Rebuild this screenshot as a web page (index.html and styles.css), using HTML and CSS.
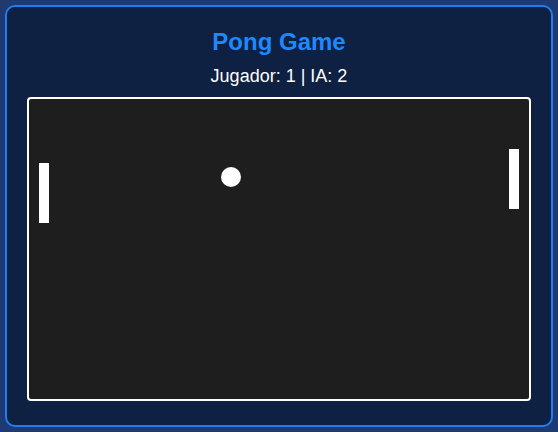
FILE: index.html
```html
<!DOCTYPE html>
<html lang="es">
<head>
<meta charset="utf-8">
<title>Pong Game</title>
<link rel="stylesheet" href="styles.css">
</head>
<body>
<div class="game-container">
  <h1 class="title">Pong Game</h1>
  <p class="score">Jugador: 1 | IA: 2</p>
  <svg class="board" width="500" height="300" viewBox="0 0 500 300">
    <rect x="10" y="64" width="10" height="60" fill="#ffffff"/>
    <rect x="480" y="50" width="10" height="60" fill="#ffffff"/>
    <circle cx="202" cy="78" r="10" fill="#ffffff"/>
  </svg>
</div>
</body>
</html>
```

FILE: styles.css
```css
html, body {
  margin: 0;
  height: 100%;
}
body {
  background: #1e3a70;
  font-family: "Liberation Sans", Arial, sans-serif;
  display: flex;
  align-items: center;
  justify-content: center;
}
.game-container {
  background: #0f2142;
  border: 2px solid #1e7df2;
  border-radius: 10px;
  padding: 20px;
  text-align: center;
}
.title {
  margin: 0 0 10px;
  font-size: 24px;
  font-weight: bold;
  color: #1e88ff;
  line-height: 28px;
  padding-top: 1px;
}
.score {
  margin: 0 0 10px;
  font-size: 18px;
  color: #ffffff;
  line-height: 21px;
}
.board {
  background: #1e1e1e;
  border: 2px solid #ffffff;
  border-radius: 4px;
}
```
